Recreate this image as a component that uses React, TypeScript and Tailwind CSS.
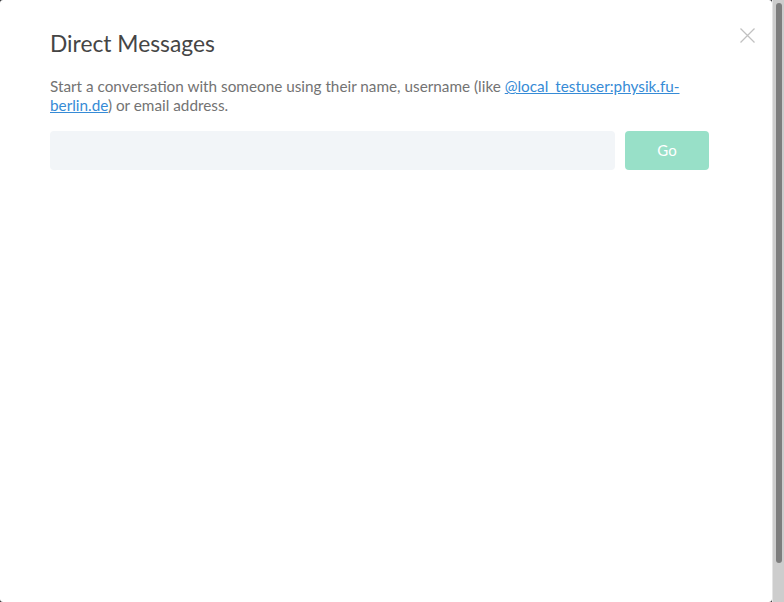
export default function App() {
  return (
    <div className="flex h-[602px] w-[784px] overflow-hidden bg-[#2e2f32]" style={{ fontFamily: "Lato, 'Noto Sans', sans-serif" }}>
      <div className="flex h-full flex-1 flex-col rounded-[3px] bg-white pl-[50px] pr-[63px] pt-[30px]">
        <div className="flex items-start justify-between">
          <h1 className="text-[22.8px] leading-[26px] text-[#454545]">Direct Messages</h1>
          <button type="button" className="-mr-[46px] mt-[-2px] p-0 text-[#c1c1c1]">
            <svg width="15" height="15" viewBox="0 0 15 15" fill="none" stroke="currentColor" strokeWidth="1.3">
              <path d="M0.5 0.5 L14.5 14.5 M14.5 0.5 L0.5 14.5" />
            </svg>
          </button>
        </div>

        <p className="mt-[21px] text-[15.3px] leading-[19px] text-[#737373]">
          Start a conversation with someone using their name, username (like{" "}
          <a href="#" className="text-[#368bd6] underline">@local_testuser:physik.fu-berlin.de</a>) or email address.
        </p>

        <div className="mt-[16px] flex gap-[10px]">
          <input
            type="text"
            className="h-[39px] flex-1 rounded-[4px] bg-[#f2f5f8] px-3 text-[15px] outline-none"
          />
          <button
            type="button"
            className="h-[39px] w-[84px] rounded-[4px] bg-[#98e0c8] text-[15px] text-white"
          >
            Go
          </button>
        </div>
      </div>

      <div className="flex h-full w-[12px] justify-center border-l border-[#e4e4e4] bg-[#cdcdcd] pt-[3px]">
        <div className="h-[560px] w-[6px] rounded-full bg-[#7d7d7d]" />
      </div>
    </div>
  );
}
